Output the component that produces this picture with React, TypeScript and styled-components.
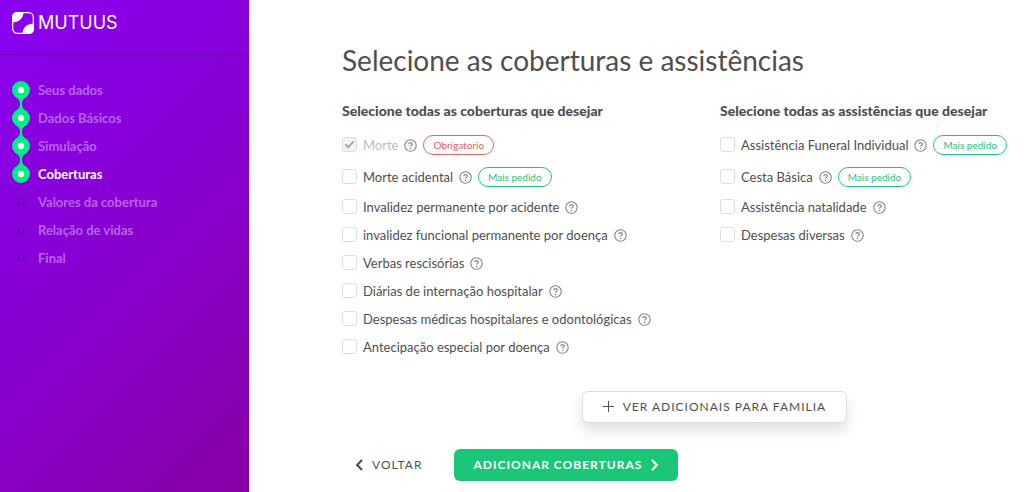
import React from "react";
import styled, { createGlobalStyle, css } from "styled-components";

const GlobalStyle = createGlobalStyle`
  *, *::before, *::after { box-sizing: border-box; }
  body {
    margin: 0;
    background: #fff;
    color: #4f4f4f;
    font-family: Lato, "Open Sans", sans-serif;
    font-size: 13px;
    line-height: 20px;
  }
`;

const Page = styled.div`
  display: flex;
  min-height: 100vh;
`;

const Sidebar = styled.aside`
  flex: 0 0 249px;
  background: linear-gradient(135deg, #8a00f2 0%, #8800d0 50%, #8700a4 100%);
`;

const Brand = styled.header`
  display: flex;
  align-items: center;
  gap: 4px;
  height: 55px;
  padding: 0 12px 8px;
  border-bottom: 1px solid rgba(60, 0, 110, 0.35);
  color: #fff;
`;

const BrandName = styled.span`
  font-family: Inter, sans-serif;
  font-size: 18px;
  line-height: 24px;
`;

const Steps = styled.ol`
  list-style: none;
  margin: 0;
  padding: 21px 12px;
`;

const Step = styled.li`
  display: flex;
  align-items: center;
  gap: 8px;
  height: 28px;
`;

const StepLink = styled.a<{ $active?: boolean }>`
  color: ${(p) => (p.$active ? "#fff" : "rgba(255, 255, 255, 0.4)")};
  font-weight: 700;
  text-decoration: none;
`;

const Main = styled.main`
  flex: 1;
  min-width: 0;
  padding: 44px 16px 11px 93px;
`;

const Title = styled.h1`
  margin: 0;
  font-size: 28px;
  line-height: 32px;
  font-weight: 400;
`;

const Columns = styled.div`
  display: grid;
  grid-template-columns: minmax(0, 21fr) minmax(0, 16fr);
  margin-top: 25px;
`;

const Group = styled.fieldset`
  min-width: 0;
  margin: 0;
  padding: 0;
  border: 0;
`;

const GroupTitle = styled.legend`
  padding: 0;
  margin-bottom: 12px;
  font-size: 14px;
  font-weight: 900;
  white-space: nowrap;
`;

const Options = styled.ul`
  display: flex;
  flex-direction: column;
  gap: 8px;
  list-style: none;
  margin: 0;
  padding: 0;
`;

const Option = styled.li<{ $tagged: boolean }>`
  display: flex;
  align-items: center;
  gap: 6px;
  height: ${(p) => (p.$tagged ? 24 : 20)}px;
  white-space: nowrap;
`;

const OptionLabel = styled.label<{ $disabled?: boolean }>`
  display: flex;
  align-items: center;
  gap: 6px;
  color: ${(p) => (p.$disabled ? "#bdbdbd" : "inherit")};
`;

const Checkbox = styled.input`
  appearance: none;
  display: grid;
  place-content: center;
  width: 15px;
  height: 15px;
  margin: 0 0 2px;
  border: 1px solid #dedede;
  border-radius: 3px;
  background: #fff;

  &:disabled {
    background: #f3f3f3;
  }

  &:checked::after {
    content: "";
    width: 9px;
    height: 5px;
    margin-bottom: 2px;
    border: solid #a8a8a8;
    border-width: 0 0 2px 2px;
    transform: rotate(-45deg);
  }
`;

const HelpButton = styled.button`
  display: flex;
  padding: 0;
  border: 0;
  background: none;
  color: #858585;
`;

const Tag = styled.span<{ $tone: "red" | "green" }>`
  height: 20px;
  padding: 0 9px;
  border: 1px solid;
  border-radius: 10px;
  font-size: 10px;
  line-height: 18px;
  color: ${(p) => (p.$tone === "red" ? "#f0605f" : "#1dc57c")};
`;

const ExtraRow = styled.div`
  margin-top: 34px;
  padding-left: 36%;
`;

const Actions = styled.div`
  display: flex;
  gap: 13px;
  margin-top: 26px;
`;

const Button = styled.button<{ $kind: "outline" | "text" | "primary" }>`
  display: inline-flex;
  align-items: center;
  gap: 8px;
  height: 32px;
  padding: 0 18px;
  border: 1px solid transparent;
  border-radius: 6px;
  background: none;
  color: inherit;
  font: inherit;
  font-size: 12px;
  letter-spacing: 1px;
  white-space: nowrap;
  text-transform: uppercase;

  ${(p) =>
    p.$kind === "outline" &&
    css`
      padding: 0 20px;
      background: #fff;
      border-color: #dcdcdc;
      box-shadow: 0 8px 14px rgba(0, 0, 0, 0.12);
    `}
  ${(p) =>
    p.$kind === "text" &&
    css`
      padding: 0 18px 0 12px;
    `}
  ${(p) =>
    p.$kind === "primary" &&
    css`
      background: #1ac678;
      color: #fff;
      font-weight: 700;
    `}
`;

const Logo = () => (
  <svg width="22" height="22" viewBox="0 0 22 22" aria-hidden="true">
    <rect x="0.7" y="0.7" width="20.6" height="20.6" rx="4.6" fill="none" stroke="#fff" strokeWidth="1.2" />
    <path d="M5 0H11.5C11.5 6.5 6.5 10.5 0 10.5V5A5 5 0 0 1 5 0Z" fill="#fff" />
    <path d="M17 22H10.5C10.5 15.5 15.5 11.5 22 11.5V17A5 5 0 0 1 17 22Z" fill="#fff" />
  </svg>
);

type MarkerProps = { done: boolean; linkUp: boolean; linkDown: boolean };

const Marker = ({ done, linkUp, linkDown }: MarkerProps) => (
  <svg width="18" height="28" viewBox="0 0 18 28" aria-hidden="true">
    {done ? (
      <>
        <g fill="#00ef84">
          <circle cx="9" cy="14" r="9" />
          {linkUp && <path d="M2.5 8C6 5.5 8 4 8 0H10C10 4 12 5.5 15.5 8Z" />}
          {linkDown && <path d="M2.5 20C6 22.5 8 24 8 28H10C10 24 12 22.5 15.5 20Z" />}
        </g>
        <circle cx="9" cy="14" r="3.2" fill="#fff" />
      </>
    ) : (
      <circle cx="9" cy="14" r="3" fill="none" stroke="#5a08a6" strokeWidth="1.2" />
    )}
  </svg>
);

const HelpIcon = () => (
  <svg width="13" height="13" viewBox="0 0 13 13" fill="none" stroke="currentColor" aria-hidden="true">
    <circle cx="6.5" cy="6.5" r="5.7" strokeWidth="1.1" />
    <path d="M4.8 5.3C4.8 3 8.3 3.1 8.3 5.1C8.3 6.4 6.5 6.4 6.5 7.8" strokeWidth="1.2" />
    <path d="M6.5 8.8V10.1" strokeWidth="1.3" />
  </svg>
);

const Chevron = ({ back }: { back?: boolean }) => (
  <svg width="9" height="12" viewBox="0 0 9 12" fill="none" stroke="currentColor" strokeWidth="2.2" aria-hidden="true">
    <path d={back ? "M7 1L2.2 6L7 11" : "M2 1L6.8 6L2 11"} />
  </svg>
);

const Plus = () => (
  <svg width="12" height="12" viewBox="0 0 12 12" fill="none" stroke="currentColor" aria-hidden="true">
    <path d="M5.5 0V11M0 5.5H11" />
  </svg>
);

const steps = [
  "Seus dados",
  "Dados Básicos",
  "Simulação",
  "Coberturas",
  "Valores da cobertura",
  "Relação de vidas",
  "Final",
];
const currentStep = 3;

type Item = { name: string; tag?: string; required?: boolean };

const coverages: Item[] = [
  { name: "Morte", tag: "Obrigatorio", required: true },
  { name: "Morte acidental", tag: "Mais pedido" },
  { name: "Invalidez permanente por acidente" },
  { name: "invalidez funcional permanente por doença" },
  { name: "Verbas rescisórias" },
  { name: "Diárias de internação hospitalar" },
  { name: "Despesas médicas hospitalares e odontológicas" },
  { name: "Antecipação especial por doença" },
];

const assistances: Item[] = [
  { name: "Assistência Funeral Individual", tag: "Mais pedido" },
  { name: "Cesta Básica", tag: "Mais pedido" },
  { name: "Assistência natalidade" },
  { name: "Despesas diversas" },
];

const OptionGroup = ({ title, items }: { title: string; items: Item[] }) => (
  <Group>
    <GroupTitle>{title}</GroupTitle>
    <Options>
      {items.map((item) => (
        <Option key={item.name} $tagged={!!item.tag}>
          <OptionLabel $disabled={item.required}>
            <Checkbox type="checkbox" defaultChecked={item.required} disabled={item.required} />
            {item.name}
          </OptionLabel>
          <HelpButton type="button" aria-label={`Ajuda: ${item.name}`}>
            <HelpIcon />
          </HelpButton>
          {item.tag && <Tag $tone={item.required ? "red" : "green"}>{item.tag}</Tag>}
        </Option>
      ))}
    </Options>
  </Group>
);

export default function App() {
  return (
    <Page>
      <GlobalStyle />
      <Sidebar>
        <Brand>
          <Logo />
          <BrandName>MUTUUS</BrandName>
        </Brand>
        <nav>
          <Steps>
            {steps.map((name, i) => (
              <Step key={name}>
                <Marker done={i <= currentStep} linkUp={i > 0} linkDown={i < currentStep} />
                <StepLink
                  href="#"
                  $active={i === currentStep}
                  aria-current={i === currentStep ? "step" : undefined}
                >
                  {name}
                </StepLink>
              </Step>
            ))}
          </Steps>
        </nav>
      </Sidebar>
      <Main>
        <Title>Selecione as coberturas e assistências</Title>
        <Columns>
          <OptionGroup title="Selecione todas as coberturas que desejar" items={coverages} />
          <OptionGroup title="Selecione todas as assistências que desejar" items={assistances} />
        </Columns>
        <ExtraRow>
          <Button type="button" $kind="outline">
            <Plus />
            Ver adicionais para familia
          </Button>
        </ExtraRow>
        <Actions>
          <Button type="button" $kind="text">
            <Chevron back />
            Voltar
          </Button>
          <Button type="button" $kind="primary">
            Adicionar coberturas
            <Chevron />
          </Button>
        </Actions>
      </Main>
    </Page>
  );
}
